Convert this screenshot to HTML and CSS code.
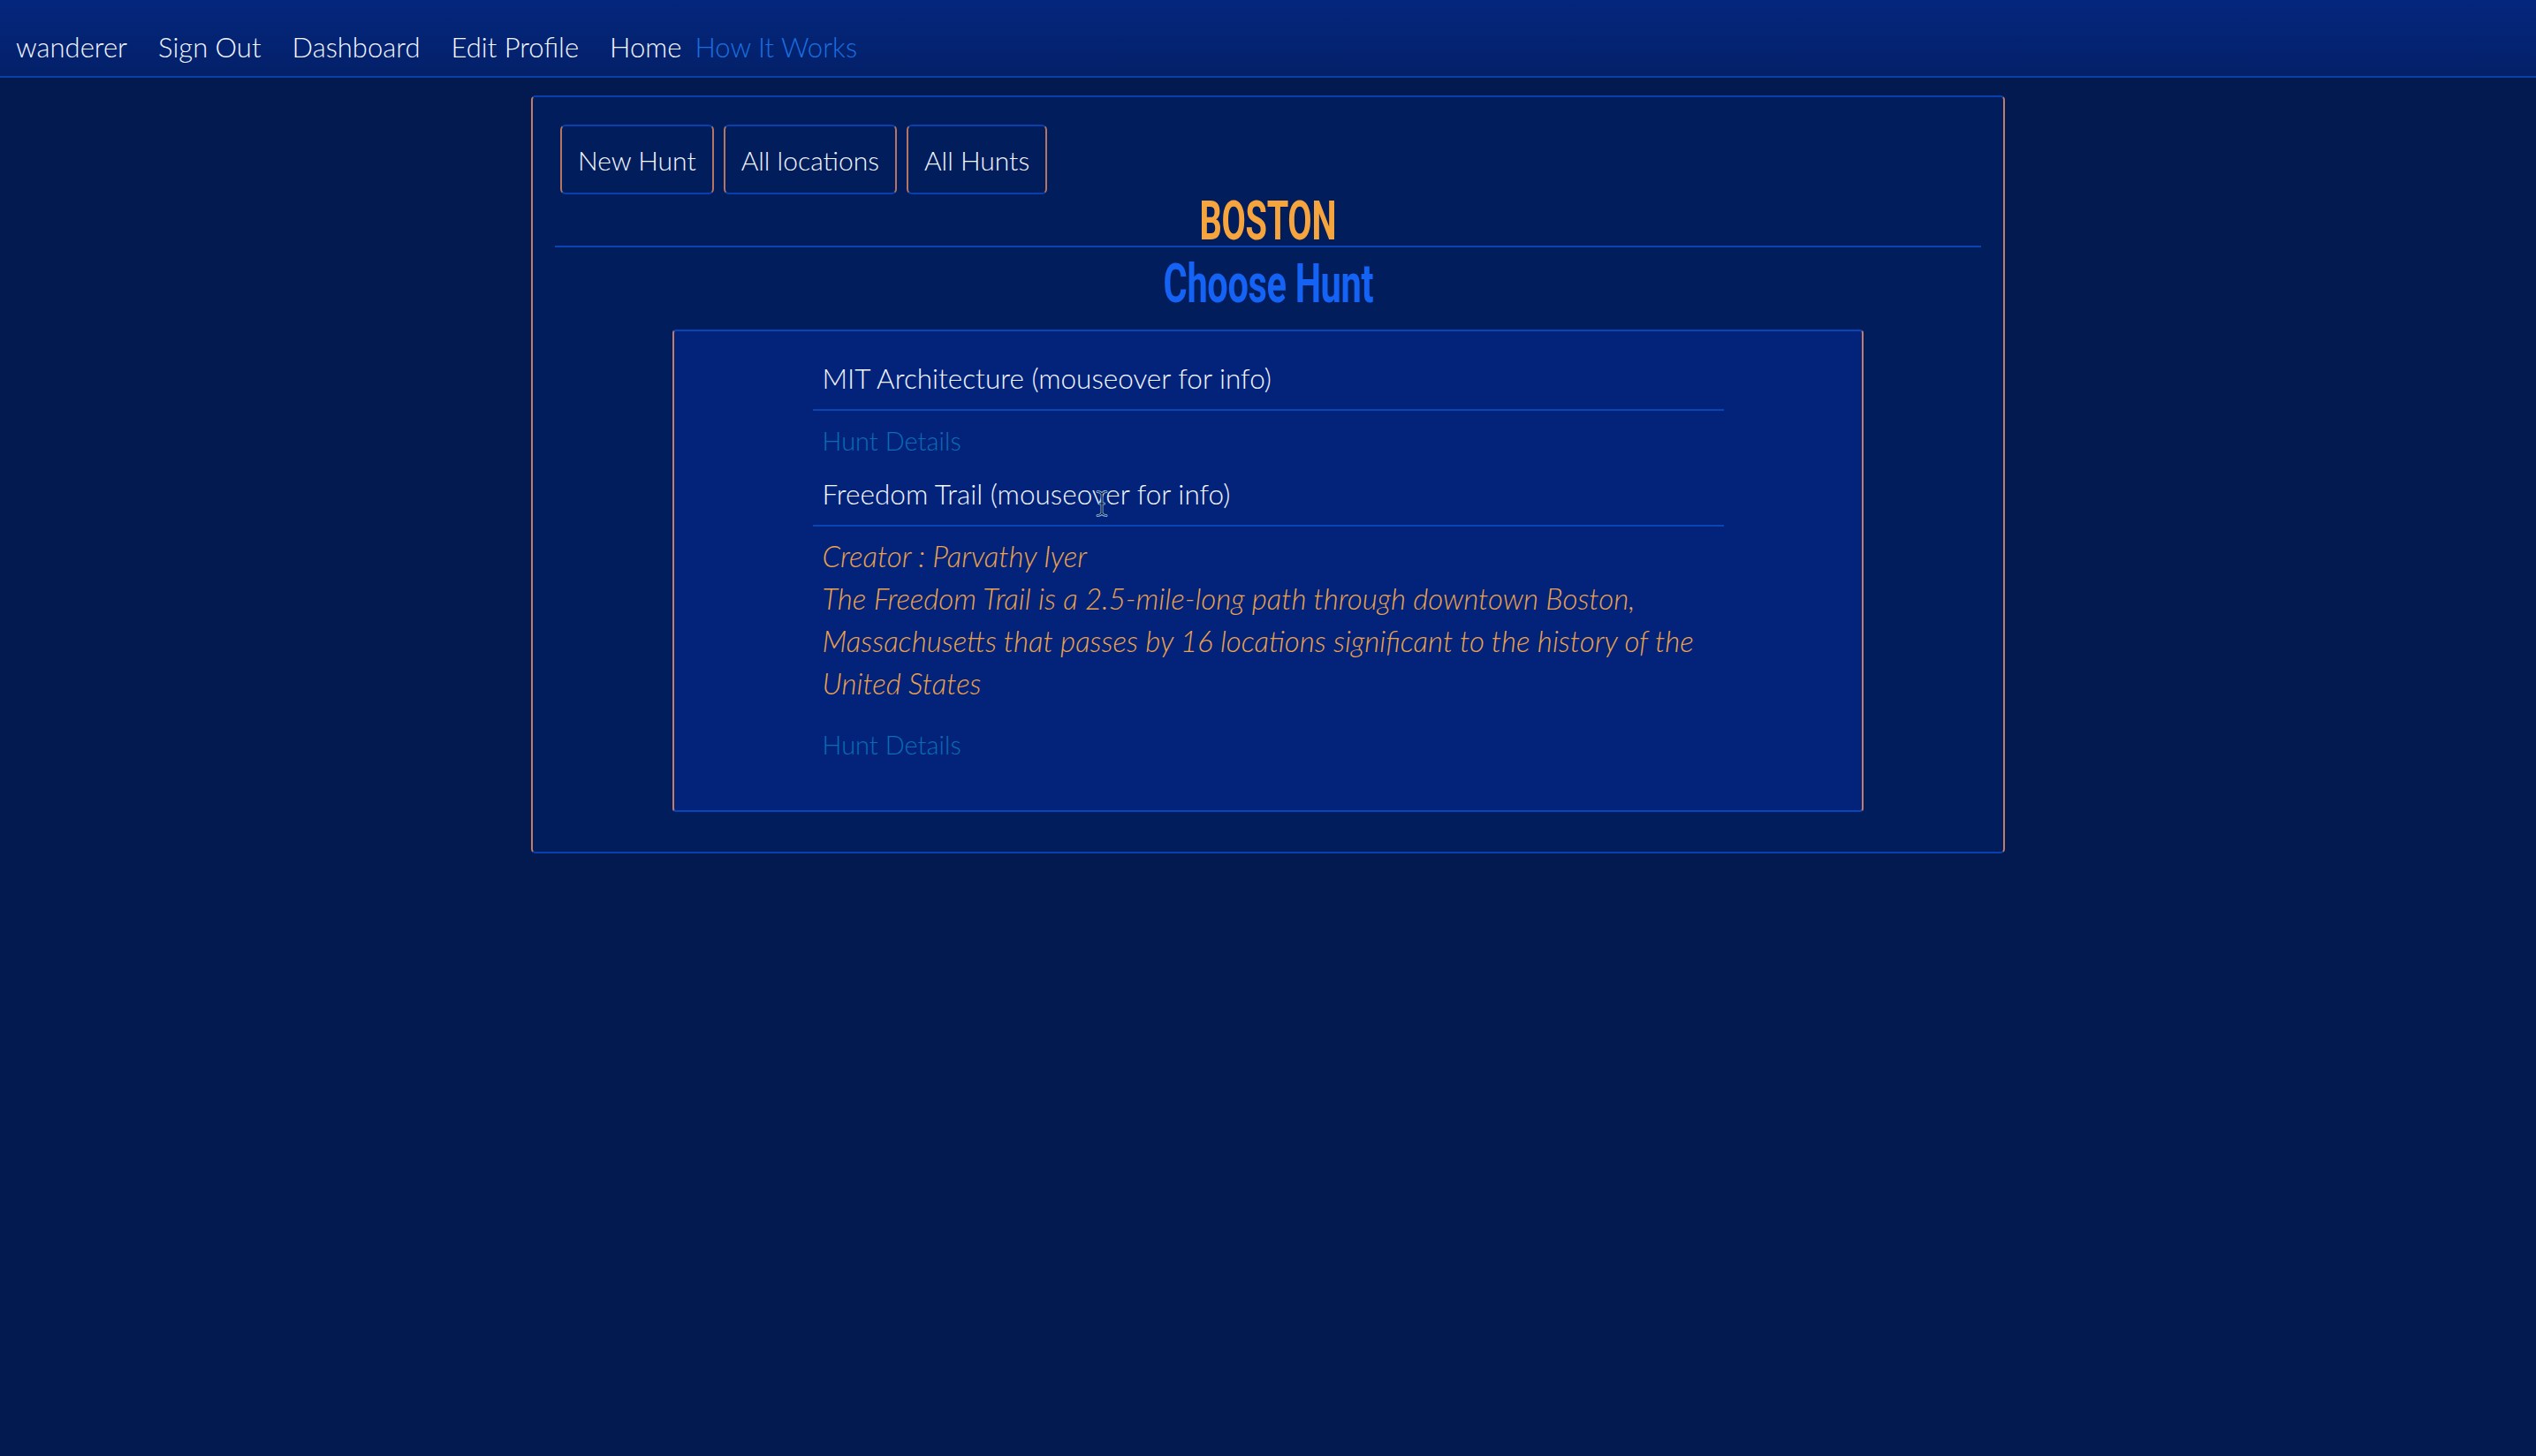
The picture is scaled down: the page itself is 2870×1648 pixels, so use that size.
FILE: index.html
```html
<!DOCTYPE html>
<html lang="en">
<head>
<meta charset="utf-8">
<title>Boston - Choose Hunt</title>
<link rel="stylesheet" href="styles.css">
</head>
<body>
<nav class="topnav">
  <a class="nav-link" href="#">wanderer</a>
  <a class="nav-link" href="#">Sign Out</a>
  <a class="nav-link" href="#">Dashboard</a>
  <a class="nav-link" href="#">Edit Profile</a>
  <span class="nav-pair">
    <a class="nav-link" href="#">Home</a>
    <a class="nav-link nav-active" href="#">How It Works</a>
  </span>
</nav>

<main class="panel">
  <div class="btn-row">
    <a class="btn" href="#">New Hunt</a>
    <a class="btn" href="#">All locations</a>
    <a class="btn" href="#">All Hunts</a>
  </div>
  <h1 class="city"><span class="condensed">BOSTON</span></h1>
  <hr class="rule">
  <h2 class="choose"><span class="condensed condensed-wide">Choose Hunt</span></h2>

  <section class="card">
    <ul class="hunt-list">
      <li class="hunt">
        <div class="hunt-title">MIT Architecture (mouseover for info)</div>
        <a class="hunt-link" href="#">Hunt Details</a>
      </li>
      <li class="hunt">
        <div class="hunt-title">Freedom Trail (mouseover for info)</div>
        <div class="hunt-info">
          <p class="creator">Creator : Parvathy Iyer</p>
          <p class="desc">The Freedom Trail is a 2.5-mile-long path through downtown Boston, Massachusetts that passes by 16 locations significant to the history of the United States</p>
        </div>
        <a class="hunt-link hunt-link-last" href="#">Hunt Details</a>
      </li>
    </ul>
    <svg class="ibeam" width="14" height="30" viewBox="0 0 14 30" aria-hidden="true">
      <path d="M2 1.5 C4.5 1.5 6 2.5 7 4 C8 2.5 9.5 1.5 12 1.5 M7 4 V26 M2 28.5 C4.5 28.5 6 27.5 7 26 C8 27.5 9.5 28.5 12 28.5 M4.5 15 H9.5" fill="none" stroke="#7fb2e6" stroke-width="3" stroke-linecap="round"/>
      <path d="M2 1.5 C4.5 1.5 6 2.5 7 4 C8 2.5 9.5 1.5 12 1.5 M7 4 V26 M2 28.5 C4.5 28.5 6 27.5 7 26 C8 27.5 9.5 28.5 12 28.5 M4.5 15 H9.5" fill="none" stroke="#0b1020" stroke-width="1.2" stroke-linecap="round"/>
    </svg>
  </section>
</main>
</body>
</html>
```

FILE: styles.css
```css
html, body {
  margin: 0;
  padding: 0;
}

body {
  background: #021a4f;
  font-family: Lato, "Open Sans", "DejaVu Sans", sans-serif;
  font-weight: 300;
  color: #f2f6ff;
  min-height: 1648px;
}

a {
  text-decoration: none;
}

/* ---------- top navigation ---------- */
.topnav {
  box-sizing: border-box;
  height: 88px;
  padding: 34px 0 0 18px;
  display: flex;
  align-items: flex-start;
  gap: 35px;
  background: linear-gradient(#04267d, #032069);
  border-bottom: 2px solid #0a3fa6;
}

.nav-link {
  color: #f2f6ff;
  font-size: 31px;
  line-height: 38px;
  white-space: nowrap;
}

.nav-pair {
  display: flex;
  gap: 15px;
}

.nav-active {
  color: #1a6fe0;
}

/* ---------- main panel ---------- */
.panel {
  box-sizing: border-box;
  width: 1668px;
  margin: 20px auto 0;
  padding: 31px 25px 45px;
  background: #021d5c;
  border: 2px solid #0a40ae;
  border-left-color: #c27c68;
  border-right-color: #c27c68;
  border-radius: 5px;
}

.btn-row {
  display: flex;
  gap: 11px;
  padding-left: 6px;
}

.btn {
  box-sizing: border-box;
  height: 79px;
  padding: 0 18px;
  display: inline-flex;
  align-items: center;
  color: #f2f6ff;
  font-size: 30px;
  border: 2px solid #0a40ae;
  border-left-color: #b87462;
  border-right-color: #b87462;
  border-radius: 6px;
}

.city,
.choose {
  margin: 0;
  text-align: center;
  font-family: Roboto, "Liberation Sans", sans-serif;
  font-weight: 700;
  font-size: 62px;
  line-height: 50px;
}

.condensed {
  display: inline-block;
  transform: scaleX(0.64);
  letter-spacing: -0.5px;
}

.condensed-wide {
  transform: scaleX(0.67);
}

.city {
  margin-top: 5px;
  color: #f6a53e;
}

.rule {
  margin: 3px 0 0;
  border: 0;
  height: 2px;
  background: #0a44b4;
}

.choose {
  margin-top: 16px;
  color: #1463f4;
}

/* ---------- hunt card ---------- */
.card {
  position: relative;
  box-sizing: border-box;
  width: 1348px;
  margin: 27px auto 0;
  padding: 33px 0 54px;
  background: #03237a;
  border: 2px solid #0a45b8;
  border-left-color: #c27c68;
  border-right-color: #c27c68;
  border-radius: 4px;
}

.hunt-list {
  list-style: none;
  margin: 0 auto;
  padding: 0;
  width: 1031px;
}

.hunt + .hunt {
  margin-top: 20px;
}

.hunt-title {
  padding: 0 0 15px 11px;
  font-size: 31.5px;
  line-height: 40px;
  color: #f2f6ff;
  border-bottom: 2px solid #0a45b4;
}

.hunt-link {
  display: block;
  margin-top: 14px;
  padding-left: 11px;
  font-size: 29px;
  line-height: 40px;
  color: #0a6cb4;
}

.hunt-info {
  margin-top: 9px;
  padding-left: 11px;
  font-style: italic;
  font-size: 33px;
  line-height: 48px;
  color: #eba24c;
}

.creator,
.desc {
  margin: 0;
}

.hunt-link-last {
  margin-top: 26px;
}

.ibeam {
  position: absolute;
  left: 477px;
  top: 180px;
}
```
